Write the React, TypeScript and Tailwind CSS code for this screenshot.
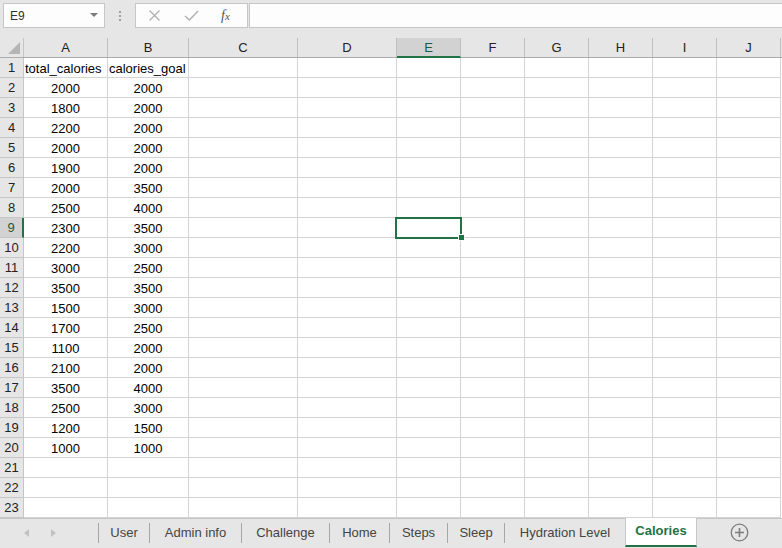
import React from 'react';

const totals = [2000, 1800, 2200, 2000, 1900, 2000, 2500, 2300, 2200, 3000, 3500, 1500, 1700, 1100, 2100, 3500, 2500, 1200, 1000];
const goals = [2000, 2000, 2000, 2000, 2000, 3500, 4000, 3500, 3000, 2500, 3500, 3000, 2500, 2000, 2000, 4000, 3000, 1500, 1000];

const columns = [
  { name: 'A', w: 'w-[84px]' },
  { name: 'B', w: 'w-[81px]' },
  { name: 'C', w: 'w-[109px]' },
  { name: 'D', w: 'w-[99px]' },
  { name: 'E', w: 'w-[64px]' },
  { name: 'F', w: 'w-[64px]' },
  { name: 'G', w: 'w-[64px]' },
  { name: 'H', w: 'w-[64px]' },
  { name: 'I', w: 'w-[64px]' },
  { name: 'J', w: 'w-[64px]' },
];

const tabs = [
  { name: 'User', w: 'w-[51px]' },
  { name: 'Admin info', w: 'w-[92px]' },
  { name: 'Challenge', w: 'w-[88px]' },
  { name: 'Home', w: 'w-[60px]' },
  { name: 'Steps', w: 'w-[58px]' },
  { name: 'Sleep', w: 'w-[57px]' },
  { name: 'Hydration Level', w: 'w-[121px]' },
];

function cellText(row: number, col: number) {
  if (row === 1) {
    if (col === 0) return 'total_calories';
    if (col === 1) return 'calories_goal';
    return '';
  }
  if (row <= 20) {
    if (col === 0) return String(totals[row - 2]);
    if (col === 1) return String(goals[row - 2]);
  }
  return '';
}

function FormulaBar() {
  return (
    <div className="flex h-[38px] items-start gap-0 bg-[#e6e6e6] pl-[3px] pt-[3px]">
      <div className="flex h-[25px] w-[102px] items-center justify-between border border-[#c6c6c6] bg-[#fdfdfd] pl-[6px] pr-[6px] text-[12px] text-[#333]">
        <span>E9</span>
        <svg width="8" height="5" viewBox="0 0 8 5">
          <path d="M0 0 L8 0 L4 4 Z" fill="#7a7a7a" />
        </svg>
      </div>
      <div className="flex h-[25px] w-[30px] flex-col items-center justify-center gap-[2px]">
        <span className="h-[2px] w-[2px] bg-[#a0a0a0]" />
        <span className="h-[2px] w-[2px] bg-[#a0a0a0]" />
        <span className="h-[2px] w-[2px] bg-[#a0a0a0]" />
      </div>
      <div className="flex h-[25px] w-[113px] items-center border border-[#c6c6c6] bg-[#fdfdfd] pl-[12px]">
        <svg width="13" height="13" viewBox="0 0 13 13" className="mr-[23px]">
          <path d="M1.5 1.5 L11.5 11.5 M11.5 1.5 L1.5 11.5" stroke="#b3b3b3" strokeWidth="1.4" fill="none" />
        </svg>
        <svg width="15" height="13" viewBox="0 0 15 13" className="mr-[22px]">
          <path d="M1 7 L5.5 11 L14 2" stroke="#b3b3b3" strokeWidth="1.6" fill="none" />
        </svg>
        <span className="font-['Liberation_Serif',serif] text-[14px] italic text-[#555]">f<span className="text-[11px]">x</span></span>
      </div>
      <div className="ml-[1px] h-[25px] flex-1 border border-r-0 border-[#c6c6c6] bg-[#fdfdfd]" />
    </div>
  );
}

function HeaderRow() {
  return (
    <div className="flex h-[20px] border-b border-[#ababab] bg-[#e6e6e6]">
      <div className="relative w-[24px] border-r border-[#c6c6c6]">
        <svg width="12" height="12" viewBox="0 0 12 12" className="absolute bottom-[3px] right-[3px]">
          <path d="M12 0 L12 12 L0 12 Z" fill="#b5b5b5" />
        </svg>
      </div>
      {columns.map((c) =>
        c.name === 'E' ? (
          <div key={c.name} className={`${c.w} flex items-center justify-center border-r border-[#bfbfbf] border-b-2 border-b-[#217346] bg-[#d2d2d2] -mb-[1px] pt-[1px] text-[13px] text-[#1e5b3c]`}>
            {c.name}
          </div>
        ) : (
          <div key={c.name} className={`${c.w} flex items-center justify-center border-r border-[#bfbfbf] pt-[1px] text-[13px] text-[#222]`}>
            {c.name}
          </div>
        )
      )}
    </div>
  );
}

function Grid() {
  const rows = Array.from({ length: 23 }, (_, i) => i + 1);
  return (
    <div className="relative">
      {rows.map((r) => (
        <div key={r} className="flex h-[20px]">
          <div
            className={
              r === 9
                ? 'flex w-[24px] items-center justify-center border-b border-[#c6c6c6] border-r-2 border-r-[#217346] bg-[#d2d2d2] pt-[1px] text-[13px] text-[#1e5b3c]'
                : 'flex w-[24px] items-center justify-center border-b border-r border-[#c6c6c6] bg-[#e6e6e6] pt-[1px] text-[13px] text-[#222]'
            }
          >
            {r}
          </div>
          {columns.map((c, ci) => {
            const text = cellText(r, ci);
            return (
              <div
                key={c.name}
                className={`${c.w} flex items-center border-b border-r border-[#d4d4d4] pt-[2px] text-[13px] text-black ${
                  r === 1 ? 'justify-start pl-[1px]' : 'justify-center'
                }`}
              >
                {text && <span className="whitespace-nowrap">{text}</span>}
              </div>
            );
          })}
        </div>
      ))}
      {/* active cell E9 */}
      <div className="absolute left-[395px] top-[159px] h-[22px] w-[67px] border-2 border-[#217346]" />
      <div className="absolute left-[458px] top-[176px] h-[7px] w-[7px] border border-white bg-[#217346]" />
    </div>
  );
}

function TabBar() {
  return (
    <div className="flex h-[30px] items-start border-t border-[#c6c6c6] bg-[#e6e6e6] text-[13px] text-[#444]">
      <div className="flex h-[27px] w-[98px] items-center pl-[24px] gap-[22px]">
        <svg width="5" height="8" viewBox="0 0 5 8">
          <path d="M5 0 L0 4 L5 8 Z" fill="#c2c2c2" />
        </svg>
        <svg width="5" height="8" viewBox="0 0 5 8">
          <path d="M0 0 L5 4 L0 8 Z" fill="#c2c2c2" />
        </svg>
      </div>
      {tabs.map((t) => (
        <div key={t.name} className={`${t.w} flex h-[27px] items-center`}>
          <span className="h-[20px] w-px bg-[#a6a6a6]" />
          <span className="flex-1 text-center">{t.name}</span>
        </div>
      ))}
      <div className="-mt-px flex h-[29px] w-[72px] items-center justify-center border-x border-[#c6c6c6] border-b-2 border-b-[#217346] bg-white pb-[1px] font-bold text-[#217346]">
        Calories
      </div>
      <div className="flex h-[27px] w-[84px] items-center justify-center">
        <svg width="19" height="19" viewBox="0 0 19 19">
          <circle cx="9.5" cy="9.5" r="8.3" stroke="#7d7d7d" strokeWidth="1.3" fill="none" />
          <path d="M9.5 5 V14 M5 9.5 H14" stroke="#7d7d7d" strokeWidth="1.6" />
        </svg>
      </div>
    </div>
  );
}

export default function App() {
  return (
    <div className="h-[548px] w-[782px] overflow-hidden bg-white font-['Liberation_Sans',Arial,sans-serif]">
      <FormulaBar />
      <HeaderRow />
      <Grid />
      <TabBar />
    </div>
  );
}
